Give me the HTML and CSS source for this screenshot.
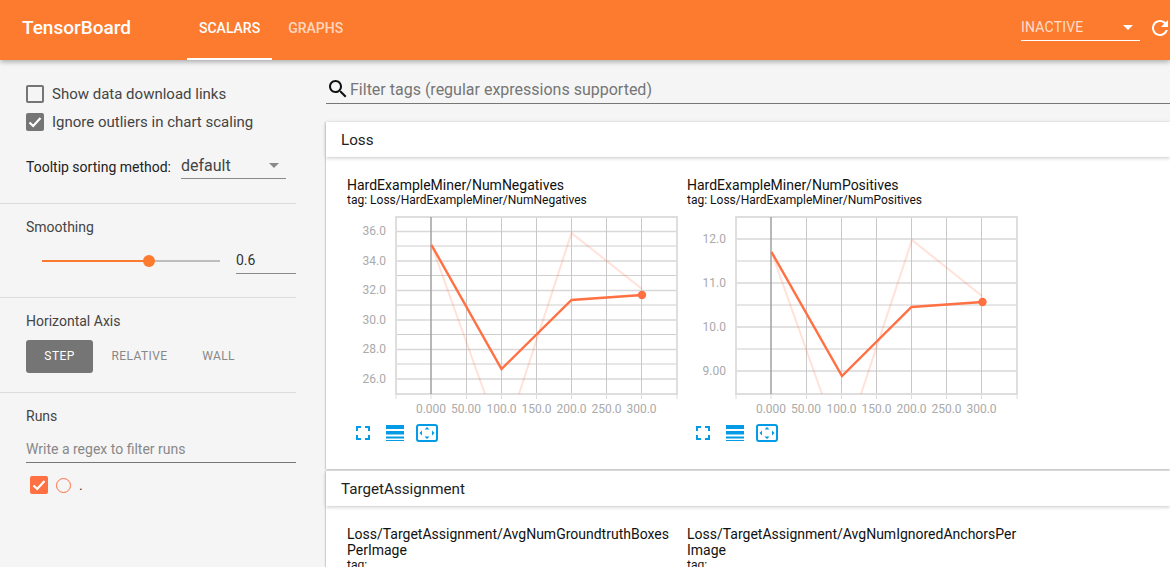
FILE: index.html
```html
<!DOCTYPE html>
<html lang="en">
<head>
  <meta charset="UTF-8">
  <title>TensorBoard</title>
  <link rel="stylesheet" href="styles.css">
</head>
<body>
  <header class="toolbar">
    <div class="brand">TensorBoard</div>
    <nav class="tabs">
      <a class="tab active">SCALARS</a>
      <a class="tab">GRAPHS</a>
    </nav>
    <div class="toolbar-right">
      <div class="plugin-select">
        <span>INACTIVE</span>
        <i class="arrow"></i>
      </div>
      <svg class="reload" width="24" height="24" viewBox="0 0 24 24"><path d="M17.65 6.35C16.2 4.9 14.21 4 12 4c-4.42 0-7.99 3.58-7.99 8s3.57 8 7.99 8c3.73 0 6.84-2.55 7.73-6h-2.08c-.82 2.33-3.04 4-5.65 4-3.31 0-6-2.69-6-6s2.69-6 6-6c1.66 0 3.14.69 4.22 1.78L13 11h7V4l-2.35 2.35z"/></svg>
    </div>
  </header>

  <div class="layout">
    <aside class="sidebar">
      <section class="side-section options">
        <label class="check-row"><span class="box"></span>Show data download links</label>
        <label class="check-row"><span class="box checked"><svg width="18" height="18" viewBox="0 0 18 18"><path d="M3.5 9.5l3.7 3.5 7.3-8" /></svg></span>Ignore outliers in chart scaling</label>
        <div class="sort-row">
          <span class="sort-label">Tooltip sorting method:</span>
          <div class="sort-select"><span>default</span><i class="arrow grey"></i></div>
        </div>
      </section>

      <section class="side-section smoothing">
        <div class="side-title">Smoothing</div>
        <div class="slider-row">
          <div class="slider"><div class="slider-fill"></div><div class="slider-knob"></div></div>
          <div class="slider-value">0.6</div>
        </div>
      </section>

      <section class="side-section axis">
        <div class="side-title">Horizontal Axis</div>
        <div class="axis-buttons">
          <span class="axis-btn selected">STEP</span>
          <span class="axis-btn">RELATIVE</span>
          <span class="axis-btn">WALL</span>
        </div>
      </section>

      <section class="side-section runs">
        <div class="side-title">Runs</div>
        <div class="runs-filter">Write a regex to filter runs</div>
        <div class="run-row">
          <span class="run-box"><svg width="18" height="18" viewBox="0 0 18 18"><path d="M3.5 9.5l3.7 3.5 7.3-8" /></svg></span>
          <span class="run-radio"></span>
          <span class="run-name">.</span>
        </div>
      </section>
    </aside>

    <main class="content">
      <div class="filter-bar">
        <svg width="24" height="24" viewBox="0 0 24 24"><path d="M15.5 14h-.79l-.28-.27C15.41 12.59 16 11.11 16 9.5 16 5.91 13.09 3 9.5 3S3 5.91 3 9.5 5.91 16 9.5 16c1.61 0 3.09-.59 4.23-1.57l.27.28v.79l5 4.99L20.49 19l-4.99-5zm-6 0C7.01 14 5 11.99 5 9.5S7.01 5 9.5 5 14 7.01 14 9.5 11.99 14 9.5 14z"/></svg>
        <span>Filter tags (regular expressions supported)</span>
      </div>

      <section class="category">
        <h2 class="category-head">Loss</h2>
        <div class="cards">
          <article class="card">
            <div class="card-title">HardExampleMiner/NumNegatives</div>
            <div class="card-tag">tag: Loss/HardExampleMiner/NumNegatives</div>
            <svg class="chart" width="340" height="206" viewBox="347 213 340 206">
              <g class="grid-h">
                <path d="M396 231.5H677M396 261H677M396 290.5H677M396 320H677M396 349.5H677M396 379H677"/>
              </g>
              <g class="grid-minor">
                <path d="M396 246H677M396 275.5H677M396 305H677M396 334.5H677M396 364H677"/>
              </g>
              <g class="grid-v">
                <path d="M466.5 217V394M501.5 217V394M536.5 217V394M571.5 217V394M606.5 217V394M641.5 217V394"/>
              </g>
              <path class="grid-frame" d="M396 217H677V394H396Z"/>
              <path class="axis-zero" d="M431 217V394"/>
              <path class="ticks" d="M396 394V399M431 394V399M466.5 394V399M501.5 394V399M536.5 394V399M571.5 394V399M606.5 394V399M641.5 394V399M677 394V399"/>
              <g class="y-labels">
                <text x="386" y="235">36.0</text>
                <text x="386" y="264.5">34.0</text>
                <text x="386" y="294">32.0</text>
                <text x="386" y="323.5">30.0</text>
                <text x="386" y="353">28.0</text>
                <text x="386" y="382.5">26.0</text>
              </g>
              <g class="x-labels">
                <text x="431" y="413">0.000</text>
                <text x="466" y="413">50.00</text>
                <text x="501.5" y="413">100.0</text>
                <text x="536.5" y="413">150.0</text>
                <text x="571.5" y="413">200.0</text>
                <text x="606.5" y="413">250.0</text>
                <text x="641.5" y="413">300.0</text>
              </g>
              <path class="raw" d="M431.5 245L485 394M519 394L571.5 233L642 289"/>
              <path class="smooth" d="M431.5 245L501.5 369L571.5 300L642 295"/>
              <circle class="dot" cx="642" cy="295" r="4.2"/>
            </svg>
            <div class="card-actions">
              <svg width="24" height="24" viewBox="0 0 24 24"><path d="M7 14H5v5h5v-2H7v-3zm-2-4h2V7h3V5H5v5zm12 7h-3v2h5v-5h-2v3zM14 7h3v3h2V5h-5v2z"/></svg>
              <svg width="24" height="24" viewBox="0 0 24 24"><path d="M3 4h18v4H3zM3 10h18v3.500H3zM3 15.500h18v2H3zM3 19h18v1H3z"/></svg>
              <svg width="24" height="24" viewBox="0 0 24 24"><rect class="fit-frame" x="2" y="4" width="20" height="16" rx="2"/><path d="M12 6l2.500 2.500h-5zM12 18l2.500-2.500h-5zM4.500 12L7 9.500v5zM19.500 12L17 9.500v5z"/></svg>
            </div>
          </article>

          <article class="card">
            <div class="card-title">HardExampleMiner/NumPositives</div>
            <div class="card-tag">tag: Loss/HardExampleMiner/NumPositives</div>
            <svg class="chart" width="340" height="206" viewBox="687 213 340 206">
              <g class="grid-h">
                <path d="M736 239H1017M736 283H1017M736 327H1017M736 371H1017"/>
              </g>
              <g class="grid-minor">
                <path d="M736 261H1017M736 305H1017M736 349H1017"/>
              </g>
              <g class="grid-v">
                <path d="M806.5 217V394M841.500 217V394M876.5 217V394M911.5 217V394M946.5 217V394M981.5 217V394"/>
              </g>
              <path class="grid-frame" d="M736 217H1017V394H736Z"/>
              <path class="axis-zero" d="M771 217V394"/>
              <path class="ticks" d="M736 394V399M771 394V399M806.5 394V399M841.500 394V399M876.5 394V399M911.5 394V399M946.5 394V399M981.5 394V399M1017 394V399"/>
              <g class="y-labels">
                <text x="726" y="243">12.0</text>
                <text x="726" y="287">11.0</text>
                <text x="726" y="331">10.0</text>
                <text x="726" y="375">9.00</text>
              </g>
              <g class="x-labels">
                <text x="771" y="413">0.000</text>
                <text x="806" y="413">50.00</text>
                <text x="841.5" y="413">100.0</text>
                <text x="876.5" y="413">150.0</text>
                <text x="911.5" y="413">200.0</text>
                <text x="946.5" y="413">250.0</text>
                <text x="981.5" y="413">300.0</text>
              </g>
              <path class="raw" d="M771.5 252L822 394M861 394L912 240L982 296"/>
              <path class="smooth" d="M771.5 252L842 376L911.5 307L982.5 302"/>
              <circle class="dot" cx="982.5" cy="302" r="4.2"/>
            </svg>
            <div class="card-actions">
              <svg width="24" height="24" viewBox="0 0 24 24"><path d="M7 14H5v5h5v-2H7v-3zm-2-4h2V7h3V5H5v5zm12 7h-3v2h5v-5h-2v3zM14 7h3v3h2V5h-5v2z"/></svg>
              <svg width="24" height="24" viewBox="0 0 24 24"><path d="M3 4h18v4H3zM3 10h18v3.500H3zM3 15.500h18v2H3zM3 19h18v1H3z"/></svg>
              <svg width="24" height="24" viewBox="0 0 24 24"><rect class="fit-frame" x="2" y="4" width="20" height="16" rx="2"/><path d="M12 6l2.500 2.500h-5zM12 18l2.500-2.500h-5zM4.500 12L7 9.500v5zM19.500 12L17 9.500v5z"/></svg>
            </div>
          </article>
        </div>
      </section>

      <section class="category">
        <h2 class="category-head">TargetAssignment</h2>
        <div class="cards">
          <article class="card">
            <div class="card-title">Loss/TargetAssignment/AvgNumGroundtruthBoxes<br>PerImage</div>
            <div class="card-tag">tag:</div>
          </article>
          <article class="card">
            <div class="card-title">Loss/TargetAssignment/AvgNumIgnoredAnchorsPer<br>Image</div>
            <div class="card-tag">tag:</div>
          </article>
        </div>
      </section>
    </main>
  </div>
</body>
</html>
```

FILE: styles.css
```css
html, body {
  margin: 0;
  height: 567px;
  overflow: hidden;
}
body {
  font-family: Roboto, "Liberation Sans", sans-serif;
  background: #f5f5f5;
  color: #333;
}

/* toolbar */
.toolbar {
  position: relative;
  z-index: 2;
  display: flex;
  align-items: stretch;
  height: 60px;
  padding-left: 22px;
  background: #fd7b2e;
  color: white;
  box-shadow: 0 2px 5px rgba(0,0,0,0.3);
}
.brand {
  width: 165px;
  font-size: 19px;
  font-weight: 500;
  line-height: 56px;
}
.tabs {
  display: flex;
}
.tab {
  padding: 0 12px;
  margin-right: 4px;
  font-size: 14px;
  font-weight: 500;
  line-height: 56px;
  color: rgba(255,255,255,0.7);
  border-bottom: 2px solid transparent;
  height: 58px;
}
.tab.active {
  color: white;
  border-bottom-color: white;
}
.toolbar-right {
  display: flex;
  align-items: flex-start;
  margin-left: auto;
}
.plugin-select {
  display: flex;
  justify-content: space-between;
  align-items: center;
  box-sizing: border-box;
  width: 119px;
  height: 25px;
  margin-top: 16px;
  padding: 0 7px 2px 0;
  border-bottom: 1px solid white;
  font-size: 14px;
  letter-spacing: 0.2px;
  color: rgba(255,255,255,0.75);
}
.arrow {
  width: 0;
  height: 0;
  border-left: 5px solid transparent;
  border-right: 5px solid transparent;
  border-top: 5px solid white;
}
.arrow.grey {
  border-top-color: #8a8a8a;
}
.reload {
  margin: 16px -2px 0 8px;
  fill: white;
}

/* layout */
.layout {
  display: flex;
  align-items: flex-start;
}
.sidebar {
  flex: 0 0 296px;
  width: 296px;
  margin-right: 30px;
}
.side-section {
  padding-left: 26px;
  border-bottom: 1px solid #dcdcdc;
  box-sizing: border-box;
}
.side-title {
  font-size: 14px;
  line-height: 18px;
  color: #444;
}

/* options */
.options {
  height: 144px;
  padding-top: 25px;
}
.check-row {
  display: flex;
  align-items: center;
  height: 18px;
  margin-bottom: 10px;
  font-size: 15px;
  color: #444;
}
.box {
  box-sizing: border-box;
  width: 18px;
  height: 18px;
  margin-right: 8px;
  border: 2px solid #757575;
  border-radius: 2px;
}
.box.checked {
  border: 0;
  background: #757575;
}
.box svg, .run-box svg {
  display: block;
  fill: none;
  stroke: white;
  stroke-width: 2.2;
}
.sort-row {
  display: flex;
  align-items: flex-end;
  margin-top: 22px;
}
.sort-label {
  width: 155px;
  font-size: 14px;
  line-height: 20px;
  padding-bottom: 2px;
  color: #222;
}
.sort-select {
  display: flex;
  justify-content: space-between;
  align-items: center;
  box-sizing: border-box;
  width: 105px;
  height: 26px;
  padding-right: 7px;
  border-bottom: 1px solid #8a8a8a;
  font-size: 16px;
  color: #444;
}

/* smoothing */
.smoothing {
  height: 94px;
  padding-top: 14px;
}
.slider-row {
  display: flex;
  align-items: center;
  margin-top: 11px;
}
.slider {
  position: relative;
  width: 178px;
  height: 2px;
  margin-left: 16px;
  background: #bdbdbd;
}
.slider-fill {
  width: 107px;
  height: 2px;
  background: #fd7b2e;
}
.slider-knob {
  position: absolute;
  left: 101px;
  top: -5px;
  width: 12px;
  height: 12px;
  border-radius: 50%;
  background: #fd7b2e;
}
.slider-value {
  box-sizing: border-box;
  width: 60px;
  height: 27px;
  margin-left: 16px;
  padding-top: 5px;
  border-bottom: 1px solid #8a8a8a;
  font-size: 14px;
  color: #333;
}

/* axis */
.axis {
  height: 95px;
  padding-top: 14px;
}
.axis-buttons {
  display: flex;
  margin-top: 10px;
}
.axis-btn {
  width: 79px;
  height: 33px;
  border-radius: 3px;
  font-size: 12px;
  line-height: 33px;
  text-align: center;
  letter-spacing: 0.4px;
  color: #888;
}
.axis-btn.selected {
  width: 67px;
  margin-right: 7px;
  background: #757575;
  color: white;
}

/* runs */
.runs {
  border-bottom: 0;
  padding-top: 14px;
}
.runs-filter {
  height: 27px;
  margin-top: 10px;
  font-size: 14px;
  line-height: 28px;
  color: #888;
  border-bottom: 1px solid #777;
}
.run-row {
  display: flex;
  align-items: center;
  margin: 13px 0 0 4px;
}
.run-box {
  width: 18px;
  height: 18px;
  border-radius: 2px;
  background: #ff7043;
}
.run-radio {
  box-sizing: border-box;
  width: 15px;
  height: 15px;
  margin-left: 8px;
  border: 1.5px solid #ff7043;
  border-radius: 50%;
}
.run-name {
  margin-left: 8px;
  font-size: 14px;
}

/* main */
.content {
  flex: 1;
  min-width: 0;
}
.filter-bar {
  display: flex;
  align-items: center;
  box-sizing: border-box;
  height: 44px;
  padding-top: 15px;
  border-bottom: 1px solid #777;
  font-size: 16px;
  color: #757575;
}
.filter-bar svg {
  fill: #111;
}
.category {
  margin-top: 18px;
  background: white;
  box-shadow: -1px 0 1px rgba(0,0,0,0.1);
}
.category + .category {
  margin-top: 2px;
}
.category-head {
  height: 35px;
  margin: 0;
  padding-left: 15px;
  font-size: 15.2px;
  font-weight: 400;
  line-height: 37px;
  color: #222;
  background: white;
  box-shadow: 0 1px 4px rgba(0,0,0,0.22);
}
.cards {
  display: flex;
  padding: 20px 0 0 21px;
  height: 292px;
  box-sizing: content-box;
  box-shadow: 0 1px 2px rgba(0,0,0,0.18);
}
.card {
  width: 340px;
}
.card-title {
  font-size: 14px;
  line-height: 16px;
  color: #111;
}
.card-tag {
  font-size: 12px;
  line-height: 14px;
  color: #111;
}
.chart {
  display: block;
  margin-top: 6px;
}
.grid-h path { stroke: #d8d8d8; fill: none; stroke-width: 1.5; }
.grid-minor path { stroke: #cecece; fill: none; }
.grid-v path { stroke: #c8c8c8; fill: none; }
.grid-frame { stroke: #dedede; stroke-width: 2; fill: none; }
.axis-zero { stroke: #a0a0a0; stroke-width: 1.5; fill: none; }
.ticks { stroke: #ddd; fill: none; }
.y-labels text, .x-labels text {
  font-size: 12px;
  fill: #aaa;
}
.y-labels text { text-anchor: end; }
.x-labels text { text-anchor: middle; }
.raw { fill: none; stroke: #ff7043; stroke-opacity: 0.2; stroke-width: 2; }
.smooth { fill: none; stroke: #ff7043; stroke-width: 2.4; }
.dot { fill: #ff7043; }
.card-actions {
  display: flex;
  gap: 8px;
  margin: 2px 0 0 4px;
}
.card-actions svg {
  fill: #039be5;
}
.card-actions .fit-frame {
  fill: none;
  stroke: #039be5;
  stroke-width: 2;
}
```
